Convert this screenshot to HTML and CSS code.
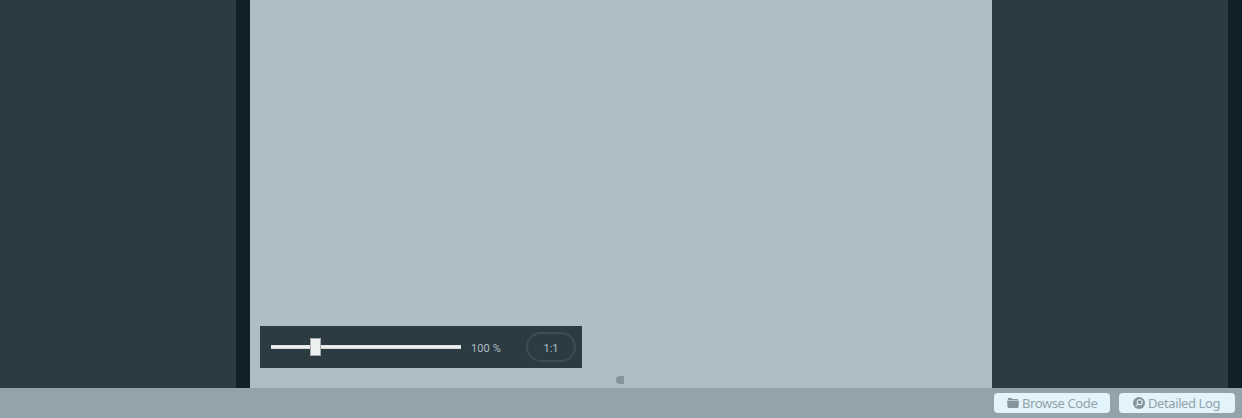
FILE: index.html
```html
<!DOCTYPE html>
<html lang="en">
<head>
<meta charset="utf-8">
<title>Workspace</title>
<link rel="stylesheet" href="styles.css">
</head>
<body>
<div class="app">
  <div class="workspace">
    <aside class="panel"></aside>
    <main class="canvas">
      <div class="zoombar">
        <div class="slider"><div class="thumb"></div></div>
        <span class="percent">100 %</span>
        <button class="reset">1:1</button>
      </div>
      <div class="handle"></div>
    </main>
    <aside class="panel"></aside>
  </div>
  <footer class="statusbar">
    <button class="action browse">
      <svg class="icon" width="12" height="12" viewBox="0 0 12 12"><path d="M.8 3.300V1.800Q.8 1 1.600 1h3l1 1H10.500q.7 0 .7.700v.600z"/><path d="M0 3.700h12l-.6 6.500q-.1.800-1 .8H1.600q-.9 0-1-.8z"/></svg>
      <span class="action-label">Browse Code</span>
    </button>
    <button class="action log">
      <svg class="icon" width="12" height="12" viewBox="0 0 12 12"><circle cx="6" cy="6" r="6"/><circle class="lens" cx="6.700" cy="5.200" r="2.500"/><path class="lens" d="M4.900 7.100L2.800 9.200"/></svg>
      <span class="action-label">Detailed Log</span>
    </button>
  </footer>
</div>
</body>
</html>
```
FILE: styles.css
```css
* { box-sizing: border-box; }
body { margin: 0; font-family: "Noto Sans", sans-serif; }
button { margin: 0; font-family: inherit; }
.app { width: 1242px; height: 418px; display: flex; flex-direction: column; overflow: hidden; }
.workspace { flex: 1; display: flex; }
.panel { width: 250px; background: #2c3a41; border-right: 14px solid #102127; }
.canvas {
  flex: 1;
  display: flex;
  flex-direction: column;
  justify-content: flex-end;
  padding: 0 10px 4px;
  background: #aebec5;
}
.zoombar {
  width: 322px;
  height: 42px;
  display: flex;
  align-items: center;
  padding: 0 6px 0 11px;
  background: #2c3a41;
}
.slider {
  width: 190px;
  height: 4px;
  display: flex;
  align-items: center;
  padding-left: 39px;
  background: #ecf0f1;
  border-bottom: 1px solid #d6d6d6;
  border-top: 1px solid #e0e2e3;
}
.thumb { width: 11px; height: 18px; flex: none; background: #ecf0f1; border: 1px solid #a9a9a9; }
.percent { margin: 3px 0 0 10px; color: #aebec5; font: 11px/17px Roboto, sans-serif; letter-spacing: 0.1px; }
.reset {
  width: 50px;
  height: 30px;
  margin-left: auto;
  padding: 3px 0 0;
  color: #aebec5;
  background: transparent;
  border: 2px solid #3d4c55;
  border-radius: 15px;
  font: 11px/17px Roboto, sans-serif;
}
.handle { width: 8px; height: 8px; margin: 8px auto 0 356px; background: #84959c; border-radius: 4px 0 0 4px; }
.statusbar {
  height: 30px;
  display: flex;
  justify-content: flex-end;
  align-items: center;
  gap: 9px;
  padding-right: 7px;
  background: #93a3aa;
}
.action {
  width: 116px;
  height: 20px;
  display: flex;
  align-items: center;
  gap: 3px;
  padding: 0 0 0 13px;
  border: 0;
  border-radius: 4px;
  background: #e2f3fb;
  color: #93a3aa;
  font-size: 13px;
  line-height: 20px;
}
.action.log { padding-left: 14px; }
.action-label { white-space: nowrap; letter-spacing: -0.4px; }
.icon { flex: none; fill: #84959c; }
.lens { fill: none; stroke: #e2f3fb; stroke-width: 1.1; }
```
